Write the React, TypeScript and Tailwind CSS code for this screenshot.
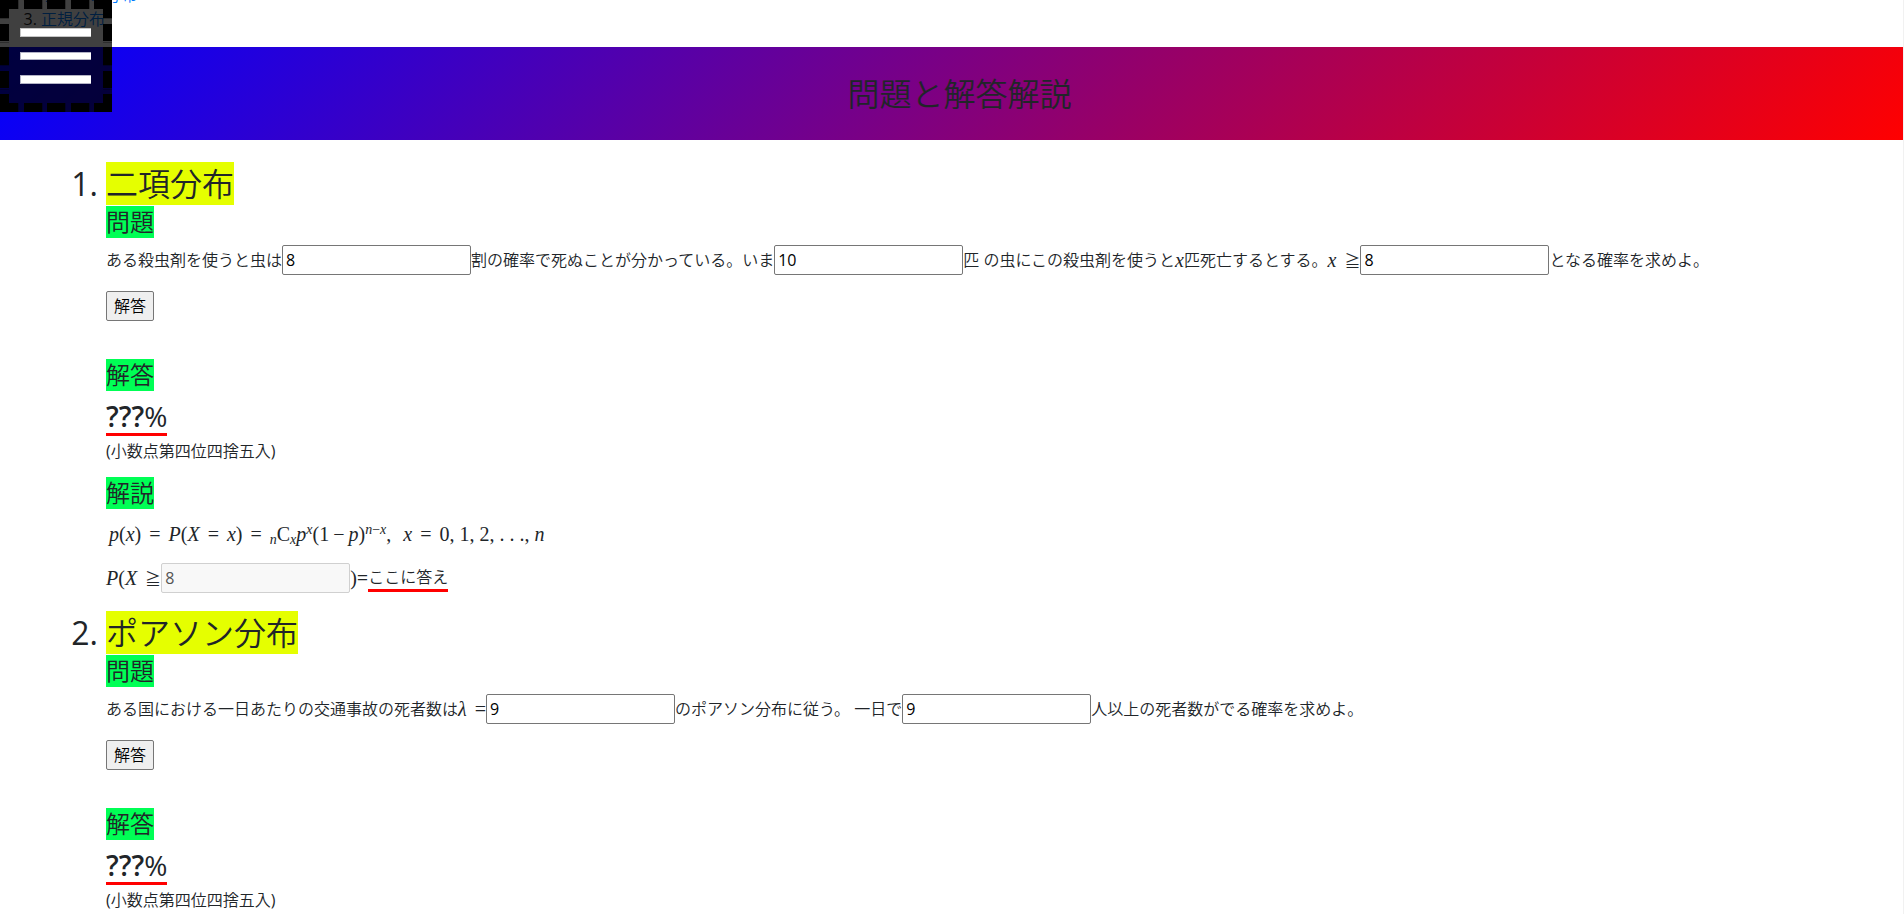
import type { ReactNode } from "react";

function Mark({ children }: { children: ReactNode }) {
  return (
    <h2 className="flex text-2xl leading-8">
      <span className="bg-[#00ff55]">{children}</span>
    </h2>
  );
}

function V({ children }: { children: ReactNode }) {
  return <i>{children}</i>;
}

function Rel({ children }: { children: ReactNode }) {
  return <span className="mx-2">{children}</span>;
}

function AtLeast() {
  return <span className="ml-2 font-['Noto_Sans_CJK_JP',sans-serif] text-base leading-6 font-[350]">≧</span>;
}

function Math({ children }: { children: ReactNode }) {
  return (
    <span className="inline-flex items-baseline whitespace-pre font-['Liberation_Serif',serif] text-xl leading-6">
      {children}
    </span>
  );
}

function Sub({ children }: { children: ReactNode }) {
  return <sub className="text-sm">{children}</sub>;
}

function Sup({ children }: { children: ReactNode }) {
  return <sup className="text-sm">{children}</sup>;
}

function Field({ label, value, disabled }: { label: string; value: string; disabled?: boolean }) {
  return (
    <input
      aria-label={label}
      defaultValue={value}
      disabled={disabled}
      className="h-[30px] w-[189px] rounded-xs border border-[#767676] bg-white px-[3px] text-base font-normal text-black disabled:border-[#d0d0d0] disabled:bg-[#f8f8f8] disabled:text-[#545454]"
    />
  );
}

function Row({ children }: { children: ReactNode }) {
  return <p className="flex h-[30px] items-center whitespace-pre">{children}</p>;
}

function Answer() {
  return (
    <>
      <button type="button" className="mt-4 block h-[30px] rounded-xs border border-[#767676] bg-[#efefef] px-[7px] leading-6 text-black">
        解答
      </button>
      <div className="mt-[38px]">
        <Mark>解答</Mark>
      </div>
      <p className="mt-2 flex text-[28px] leading-[34px] font-medium">
        <span className="border-b-3 border-[#ff0000]">
          <b className="font-semibold">???</b>%
        </span>
      </p>
      <p className="mt-[3px] leading-6 font-normal">
        (<span className="font-[350]">小数点第四位四捨五入</span>)
      </p>
    </>
  );
}

function Title({ n, children }: { n: number; children: ReactNode }) {
  return (
    <h1 className="-ml-10 flex text-[32px] leading-[43px]">
      <span className="w-10 pr-2 text-right font-normal">{n}.</span>
      <span className="bg-[#e5ff00]">{children}</span>
    </h1>
  );
}

function MenuButton() {
  const ticks = [18, 42, 65, 89];
  return (
    <button type="button" aria-label="メニュー" className="fixed top-0 left-0 z-10 size-28">
      <svg viewBox="0 0 112 112" className="size-28" shapeRendering="crispEdges">
        <rect width="112" height="112" fill="#000" fillOpacity="0.75" />
        <path
          fill="#000"
          d="M0 0H18V9H0ZM24 0H42V9H24ZM47 0H65V9H47ZM71 0H89V9H71ZM94 0H112V9H94ZM0 9H9V18H0ZM0 24H9V41H0ZM0 47H9V65H0ZM0 71H9V88H0ZM0 94H9V112H0ZM103 9H112V18H103ZM103 24H112V41H103ZM103 47H112V65H103ZM103 71H112V88H103ZM103 94H112V112H103ZM9 103H18V112H9ZM24 103H42V112H24ZM47 103H65V112H47ZM71 103H89V112H71ZM94 103H103V112H94Z"
        />
        {ticks.map((t) => (
          <path key={t} fill="#000" fillOpacity="0.3" d={`M${t} 0h1v9h-1zM${t} 103h1v9h-1zM0 ${t}h9v1h-9zM103 ${t}h9v1h-9z`} />
        ))}
        <path fill="#fff" fillOpacity="0.7" d="M20 28H91V37H20ZM20 52H91V60H20ZM20 75H91V84H20Z" />
        <path fill="#fff" d="M21 29H91V36H21ZM21 53H91V59H21ZM21 76H91V83H21Z" />
      </svg>
    </button>
  );
}

export default function App() {
  return (
    <div className="h-screen overflow-hidden border-r border-[#f1f1f1] bg-white font-['Open_Sans','Noto_Sans_CJK_JP',sans-serif] text-base font-[350] text-[#212529]">
      <MenuButton />
      <ol className="-mt-[17px] h-16 list-decimal pl-[41px] leading-6 marker:font-normal [&_a]:text-[#007bff]">
        <li value={2}>
          <a href="#poisson">ポアソン分布</a>
        </li>
        <li>
          <a href="#normal">正規分布</a>
        </li>
      </ol>
      <header className="flex h-[93px] items-center justify-center bg-linear-[135deg,#0000ff,#ff0000] pl-4">
        <h1 className="text-[32px] leading-10">問題と解答解説</h1>
      </header>
      <main className="pt-[22px] pl-[106px]">
        <section id="binomial">
          <Title n={1}>二項分布</Title>
          <div className="mt-px">
            <Mark>問題</Mark>
          </div>
          <div className="mt-[7px]">
            <Row>
              ある殺虫剤を使うと虫は
              <Field label="死ぬ確率(割)" value="8" />
              割の確率で死ぬことが分かっている。いま
              <Field label="虫の数" value="10" />
              匹 の虫にこの殺虫剤を使うと<Math><V>x</V></Math>匹死亡するとする。
              <Math><V>x</V><AtLeast /></Math>
              <Field label="死亡数の下限" value="8" />
              となる確率を求めよ。
            </Row>
          </div>
          <Answer />
          <div className="mt-3.5">
            <Mark>解説</Mark>
          </div>
          <p className="mt-3 flex h-[26px] items-center pl-[3px] leading-6">
            <Math>
              <V>p</V>(<V>x</V>)<Rel>=</Rel><V>P</V>(<V>X</V><Rel>=</Rel><V>x</V>)<Rel>=</Rel><Sub><V>n</V></Sub>C
              <Sub><V>x</V></Sub><V>p</V><Sup><V>x</V></Sup>(1<span className="mx-1">−</span><V>p</V>)
              <Sup><V>n</V>−<V>x</V></Sup>,<span className="ml-3"><V>x</V></span><Rel>=</Rel>0, 1, 2, . . ., <V>n</V>
            </Math>
          </p>
          <div className="mt-4">
            <Row>
              <Math><V>P</V>(<V>X</V><AtLeast /></Math>
              <Field label="計算に使う下限" value="8" disabled />
              <Math>)</Math>
              <span className="text-xl leading-6 font-normal">=</span>
              <span className="border-b-3 border-[#ff0000] leading-6">ここに答え</span>
            </Row>
          </div>
        </section>
        <section id="poisson" className="mt-[18px]">
          <Title n={2}>ポアソン分布</Title>
          <div className="mt-px">
            <Mark>問題</Mark>
          </div>
          <div className="mt-[7px]">
            <Row>
              ある国における一日あたりの交通事故の死者数は<Math><V>λ</V><span className="ml-2">=</span></Math>
              <Field label="平均死者数" value="9" />
              のポアソン分布に従う。 一日で
              <Field label="死者数の下限" value="9" />
              人以上の死者数がでる確率を求めよ。
            </Row>
          </div>
          <Answer />
        </section>
      </main>
    </div>
  );
}
